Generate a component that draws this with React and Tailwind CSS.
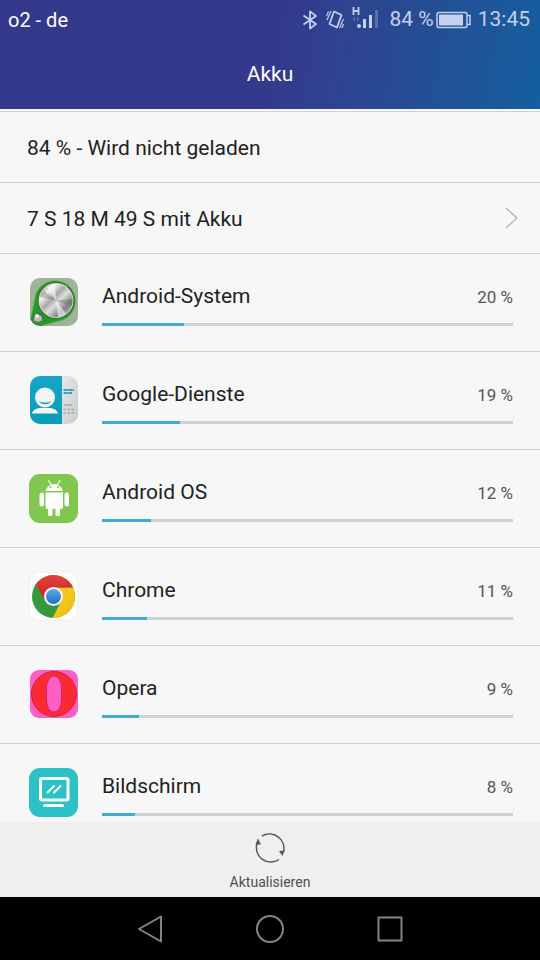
import { useId } from 'react';

const apps = [
  { name: 'Android-System', percent: 20, Icon: SystemIcon },
  { name: 'Google-Dienste', percent: 19, Icon: ContactsIcon },
  { name: 'Android OS', percent: 12, Icon: AndroidIcon },
  { name: 'Chrome', percent: 11, Icon: ChromeIcon },
  { name: 'Opera', percent: 9, Icon: OperaIcon },
  { name: 'Bildschirm', percent: 8, Icon: ScreenIcon },
];

function SystemIcon() {
  return (
    <svg viewBox="0 0 49 49" className="size-full" aria-hidden="true">
      <defs>
        <clipPath id="sysClip">
          <rect x="1" width="48" height="48" rx="10" />
        </clipPath>
        <linearGradient id="sysMetal" x1="0" y1="0" x2="1" y2="1">
          <stop offset="0" stopColor="#8d8d8d" />
          <stop offset="0.25" stopColor="#f2f2f2" />
          <stop offset="0.42" stopColor="#a9a9a9" />
          <stop offset="0.55" stopColor="#dedede" />
          <stop offset="0.75" stopColor="#848484" />
          <stop offset="1" stopColor="#c9c9c9" />
        </linearGradient>
      </defs>
      <g clipPath="url(#sysClip)">
        <rect width="49" height="49" fill="#a0b399" />
        <path d="M2 38 L6.500 17 A20.500 20.500 0 1 1 34 42 L14 47.500 A8 8 0 0 1 2 38Z" fill="#239c25" stroke="#6fb368" />
        <circle cx="27" cy="22.500" r="18.500" fill="#2c6b2b" />
        <circle cx="27" cy="22.500" r="17.500" fill="#d4d4d4" />
        <circle cx="27" cy="22.500" r="16.500" fill="url(#sysMetal)" />
        <path d="M27 22.500 L18 8.500 A16.500 16.500 0 0 1 26 6Z M27 22.500 L37 35.500 A16.500 16.500 0 0 1 29 39Z" fill="#fff" opacity="0.55" />
        <path d="M27 22.500 L11 19 A16.500 16.500 0 0 1 14.500 12Z M27 22.500 L42.500 28.500 A16.500 16.500 0 0 0 43.500 21Z" fill="#555" opacity="0.3" />
        <circle cx="9" cy="40" r="5.500" fill="#5b665b" />
        <circle cx="9" cy="41" r="4" fill="#b9bcb9" />
        <circle cx="8" cy="38" r="2" fill="#f1f1f1" />
        <path d="M6 43 A4 4 0 0 0 12 43" stroke="#3c463c" fill="none" />
      </g>
    </svg>
  );
}

function ContactsIcon() {
  return (
    <svg viewBox="0 0 49 49" className="size-full" aria-hidden="true">
      <defs>
        <clipPath id="contactsClip">
          <rect x="1" width="48" height="48" rx="10" />
        </clipPath>
        <linearGradient id="contactsBlue" x1="0" y1="0" x2="0" y2="1">
          <stop offset="0" stopColor="#16a4c8" />
          <stop offset="1" stopColor="#099cb6" />
        </linearGradient>
        <linearGradient id="contactsGrey" x1="0" y1="0" x2="1" y2="1">
          <stop offset="0" stopColor="#e6e8e8" />
          <stop offset="1" stopColor="#c9cbcb" />
        </linearGradient>
      </defs>
      <g clipPath="url(#contactsClip)">
        <rect width="33" height="49" fill="url(#contactsBlue)" />
        <rect x="33" width="16" height="49" fill="url(#contactsGrey)" />
        <circle cx="16" cy="21.500" r="10" fill="#f3f5f5" />
        <path d="M9.500 25 C13 27 19 27 22.500 25 A7 5 0 0 1 9.500 25Z" fill="#0b9cc0" />
        <path d="M3 37.500 C4 33.500 8 32 12 32 H20 C24 32 28 33.500 29 37.500Z" fill="#f3f5f5" />
        <path d="M34.500 14 H45 M34.500 17 H43" stroke="#3b9fc0" strokeWidth="2" strokeDasharray="4 .5" />
        <path d="M34.500 29 H43.500" stroke="#a2a7a7" strokeWidth="1.500" />
        <path d="M34.500 33.500 H45 M34.500 37 H45" stroke="#a2a7a7" strokeWidth="1.500" strokeDasharray="2.500 1.500" />
      </g>
    </svg>
  );
}

function AndroidIcon() {
  return (
    <svg viewBox="0 0 49 49" className="size-full" aria-hidden="true">
      <rect width="49" height="49" rx="11" fill="#80c750" />
      <g fill="#fff">
        <path d="M16.500 17 A9 9 0 0 1 34 17Z" />
        <path d="M16.500 18.500 H34 V33 A2 2 0 0 1 32 35 H18.500 A2 2 0 0 1 16.500 33Z" />
        <rect x="10.500" y="18.500" width="4.500" height="14" rx="2.250" />
        <rect x="35.500" y="18.500" width="4.500" height="14" rx="2.250" />
        <rect x="19" y="30" width="4.500" height="12" rx="1.500" />
        <rect x="26.500" y="30" width="4.500" height="12" rx="1.500" />
      </g>
      <path d="M19.500 6.500 L22 10.500 M31 6.500 L28.500 10.500" stroke="#fff" strokeWidth="1.200" strokeLinecap="round" />
      <circle cx="21.500" cy="13" r="1" fill="#80c750" />
      <circle cx="29" cy="13" r="1" fill="#80c750" />
    </svg>
  );
}

function ChromeIcon() {
  return (
    <svg viewBox="0 0 49 49" className="size-full" aria-hidden="true">
      <defs>
        <clipPath id="chromeClip">
          <circle cx="24.500" cy="24.500" r="21.500" />
        </clipPath>
        <linearGradient id="chromeRed" x1="0" y1="0" x2="0" y2="1">
          <stop offset="0" stopColor="#e5483f" />
          <stop offset="1" stopColor="#c81f22" />
        </linearGradient>
        <linearGradient id="chromeYellow" x1="0" y1="0" x2="1" y2="1">
          <stop offset="0" stopColor="#f6d02c" />
          <stop offset="1" stopColor="#f0b90c" />
        </linearGradient>
        <linearGradient id="chromeBlue" x1="0" y1="0" x2="0" y2="1">
          <stop offset="0" stopColor="#62a6e6" />
          <stop offset="1" stopColor="#2271c4" />
        </linearGradient>
      </defs>
      <rect x="0.500" y="0.500" width="48" height="48" rx="10" fill="#fff" stroke="#f0f0f0" />
      <g clipPath="url(#chromeClip)">
        <rect width="49" height="49" fill="#36983c" />
        <path d="M24.500 15.500 H49 V49 H22 L32.300 29Z" fill="url(#chromeYellow)" />
        <path d="M0 0 H49 V15.500 H24.500 L16.700 29 L6 12Z" fill="url(#chromeRed)" />
      </g>
      <circle cx="24.500" cy="24.500" r="9.500" fill="#f2f4f5" />
      <circle cx="24.500" cy="24.500" r="7.500" fill="url(#chromeBlue)" />
    </svg>
  );
}

function OperaIcon() {
  return (
    <svg viewBox="0 0 49 49" className="size-full" aria-hidden="true">
      <rect x="1" width="48" height="48" rx="9" fill="#ff5fc4" />
      <circle cx="25" cy="24" r="22.500" fill="#fb2a32" stroke="#c22452" />
      <rect x="17.500" y="6" width="15" height="36" rx="7.500" ry="12" fill="#ff5fc4" stroke="#d3266a" />
    </svg>
  );
}

function ScreenIcon() {
  return (
    <svg viewBox="0 0 49 49" className="size-full" aria-hidden="true">
      <rect width="49" height="49" rx="11" fill="#2cc1c6" />
      <g fill="none" stroke="#fff" strokeLinecap="round">
        <rect x="11.500" y="10.500" width="27.500" height="21.500" rx="1.500" strokeWidth="3" />
        <path d="M15.500 37.500 H33.500" strokeWidth="3" />
        <path d="M18.500 24.500 L25 18 M25 24.500 L31.500 18" strokeWidth="2" />
      </g>
    </svg>
  );
}

function StatusBar() {
  return (
    <div className="flex h-10 items-center justify-between pr-2.5 pl-2">
      <span className="text-xl text-white">o2 - de</span>
      <div className="flex items-center text-[21px] text-[#c3d0ee]">
        <svg viewBox="0 0 16 20" className="mr-2 h-5 w-4" fill="none" stroke="currentColor" strokeWidth="1.800" aria-label="Bluetooth">
          <path d="M1.500 5.500 L14 14 L8 18.500 V1.500 L14 6 L1.500 14.500" strokeLinejoin="round" />
        </svg>
        <svg viewBox="0 0 18 20" className="mr-2 h-5 w-[18px]" fill="none" stroke="currentColor" aria-label="Vibration">
          <path d="M8 1.500 L15.500 5 L11 17.500 L3.500 14Z" strokeWidth="1.800" strokeLinejoin="round" />
          <path d="M5 1 L1 10 M2.500 1.500 L0.500 6 M17.500 9 L13.500 18 M17.500 14 L16 18" strokeWidth="1.200" />
        </svg>
        <svg viewBox="0 0 28 24" className="mr-2.5 mb-1 h-6 w-7" aria-label="Signal">
          <path d="M1.500 1 V9 M6.500 1 V9 M1.500 5 H6.500" stroke="currentColor" strokeWidth="1.800" />
          <path d="M3 10 L0.500 13 L3 16Z M5 10 L7.500 13 L5 16Z" fill="currentColor" opacity="0.3" />
          <circle cx="7" cy="20" r="2" fill="currentColor" />
          <rect x="11" y="13" width="3" height="9" fill="currentColor" />
          <rect x="17" y="9" width="3" height="13" fill="currentColor" />
          <rect x="23" y="4" width="3" height="18" fill="currentColor" opacity="0.3" />
        </svg>
        <span>84 %</span>
        <svg viewBox="0 0 36 18" className="mr-1.5 ml-0.5 h-[18px] w-9" aria-label="Akku 84 %">
          <rect x="1" y="1.500" width="30" height="15" rx="2" fill="none" stroke="currentColor" strokeWidth="1.500" />
          <rect x="3" y="3.500" width="24" height="11" fill="currentColor" />
          <path d="M31.500 4.500 H34 V13.500 H31.500" fill="none" stroke="currentColor" strokeWidth="1.500" />
        </svg>
        <span>13:45</span>
      </div>
    </div>
  );
}

function AppRow({ name, percent, Icon }) {
  const id = useId();

  return (
    <li className="flex h-[98px] items-center border-t border-[#cfd0d0] pr-[27px] pl-[29px]">
      <div className="mr-6 size-[49px] shrink-0">
        <Icon />
      </div>
      <div className="flex-1 pt-px">
        <div className="flex h-8 items-baseline justify-between">
          <span id={id} className="text-[21px] leading-8 text-[#222]">{name}</span>
          <span className="text-[17px] text-[#555]">{percent} %</span>
        </div>
        <div
          role="progressbar"
          aria-labelledby={id}
          aria-valuenow={percent}
          aria-valuemin={0}
          aria-valuemax={100}
          className="mt-[11px] h-[3px] bg-[#cbd5d6]"
        >
          <div className="h-full bg-[#42abd4]" style={{ width: `${percent}%` }} />
        </div>
      </div>
    </li>
  );
}

export default function App() {
  return (
    <div className="flex h-screen flex-col bg-[#f7f7f7] font-[Roboto,sans-serif]">
      <header className="shrink-0 bg-linear-100 from-[#34398b] from-50% via-[#225095] via-80% to-[#135f9f]">
        <StatusBar />
        <h1 className="h-[69px] pt-[18px] text-center text-[21px] leading-8 text-white">Akku</h1>
      </header>

      <main className="min-h-0 flex-1 overflow-y-auto pt-0.5 [scrollbar-width:none]">
        <div className="flex h-[71px] items-center border-t border-[#cfd0d0] px-[27px] pt-1 text-[21px] text-[#222]">
          84 % - Wird nicht geladen
        </div>
        <button
          type="button"
          className="flex h-[71px] w-full items-center justify-between border-t border-[#cfd0d0] pr-[22px] pl-[27px] text-[21px] text-[#222]"
        >
          <span className="pt-1">7 S 18 M 49 S mit Akku</span>
          <svg viewBox="0 0 13 22" className="h-[22px] w-[13px]" fill="none" stroke="#b3b3b3" strokeWidth="1.300" aria-hidden="true">
            <path d="M1 1 L12 11 L1 21" />
          </svg>
        </button>
        <ul>
          {apps.map((app) => (
            <AppRow key={app.name} {...app} />
          ))}
        </ul>
      </main>

      <div className="flex h-[75px] shrink-0 justify-center bg-[#efefef]">
        <button type="button" className="flex flex-col items-center px-4 pt-2.5 text-sm text-[#505050]">
          <svg viewBox="0 0 32 32" className="mb-2 size-8" fill="none" stroke="#555" strokeWidth="1.500" aria-hidden="true">
            <path d="M8 4 A14.500 14.500 0 0 1 29.500 20" />
            <path d="M25 27.500 A14.500 14.500 0 0 1 3 11" />
            <path d="M25 19 L30.500 18.500 L28.500 24Z M1.500 12.500 L4 6.500 L7 12.500Z" fill="#555" stroke="none" />
          </svg>
          Aktualisieren
        </button>
      </div>

      <nav className="flex h-[63px] shrink-0 items-center justify-center gap-[92px] bg-black text-[#858585]">
        <button type="button" aria-label="Zurück">
          <svg viewBox="0 0 28 28" className="size-7" fill="none" stroke="currentColor" strokeWidth="2" strokeLinejoin="round">
            <path d="M3 14 L25 1.500 V26.500Z" />
          </svg>
        </button>
        <button type="button" aria-label="Startseite">
          <svg viewBox="0 0 28 28" className="size-7" fill="none" stroke="currentColor" strokeWidth="2">
            <circle cx="14" cy="14" r="13" />
          </svg>
        </button>
        <button type="button" aria-label="Letzte Apps">
          <svg viewBox="0 0 28 28" className="size-7" fill="none" stroke="currentColor" strokeWidth="2" strokeLinejoin="round">
            <rect x="2.500" y="2.500" width="23" height="23" />
          </svg>
        </button>
      </nav>
    </div>
  );
}
